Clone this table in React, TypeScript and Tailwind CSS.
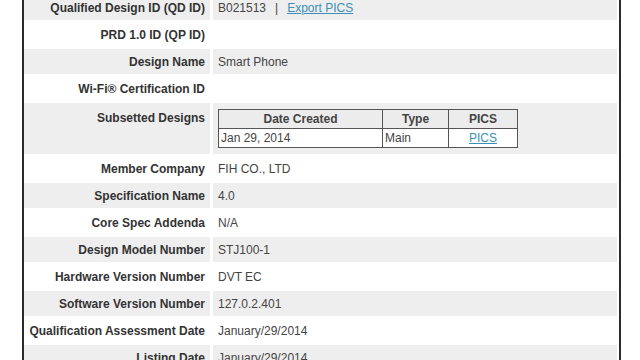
import React from "react";

function SubsetTable() {
  return (
    <table className="border-collapse border border-[#333] text-[12px] text-[#444]">
      <thead>
        <tr className="bg-[#ececec] h-[19px]">
          <th className="w-[164px] border border-[#555] font-bold text-[#444] text-center leading-none">Date Created</th>
          <th className="w-[66px] border border-[#555] font-bold text-[#444] text-center leading-none">Type</th>
          <th className="w-[69px] border border-[#555] font-bold text-[#444] text-center leading-none">PICS</th>
        </tr>
      </thead>
      <tbody>
        <tr className="bg-white h-[19px]">
          <td className="border border-[#555] pl-[2px] leading-none">Jan 29, 2014</td>
          <td className="border border-[#555] pl-[2px] leading-none">Main</td>
          <td className="border border-[#555] text-center leading-none">
            <a className="text-[#3d8fb8] underline">PICS</a>
          </td>
        </tr>
      </tbody>
    </table>
  );
}

const data: { label: string; value: React.ReactNode; tall?: boolean }[] = [
  {
    label: "Qualified Design ID (QD ID)",
    value: (
      <span>
        B021513<span className="mx-[9px]">|</span>
        <a className="text-[#3d8fb8] underline">Export PICS</a>
      </span>
    ),
  },
  { label: "PRD 1.0 ID (QP ID)", value: "" },
  { label: "Design Name", value: "Smart Phone" },
  { label: "Wi-Fi® Certification ID", value: "" },
  { label: "Subsetted Designs", value: <SubsetTable />, tall: true },
  { label: "Member Company", value: "FIH CO., LTD" },
  { label: "Specification Name", value: "4.0" },
  { label: "Core Spec Addenda", value: "N/A" },
  { label: "Design Model Number", value: "STJ100-1" },
  { label: "Hardware Version Number", value: "DVT EC" },
  { label: "Software Version Number", value: "127.0.2.401" },
  { label: "Qualification Assessment Date", value: "January/29/2014" },
  { label: "Listing Date", value: "January/29/2014" },
];

export default function App() {
  return (
    <div className="w-[640px] h-[360px] overflow-hidden bg-white font-['Liberation_Sans',Arial,sans-serif] text-[12px]">
      <div className="ml-[22px] w-[599px] h-full border-x-2 border-[#2b2b2b] pr-[2px] overflow-hidden">
        <div className="-mt-[5px] flex flex-col gap-[2px]">
          {data.map((r, i) => {
            const bg = i % 2 === 0 ? "bg-[#eeeeee]" : "bg-white";
            return (
              <div key={r.label} className={`flex gap-[3px] ${r.tall ? "h-[51px]" : "h-[25px]"}`}>
                <div
                  className={`w-[186px] shrink-0 ${bg} pr-[5px] flex justify-end font-bold text-[#333] ${
                    r.tall ? "items-start pt-[6px]" : "items-center"
                  }`}
                >
                  {r.label}
                </div>
                <div
                  className={`flex-1 ${bg} pl-[5px] flex text-[#444] ${
                    r.tall ? "items-start pt-[6px]" : "items-center"
                  }`}
                >
                  {r.value}
                </div>
              </div>
            );
          })}
        </div>
      </div>
    </div>
  );
}
